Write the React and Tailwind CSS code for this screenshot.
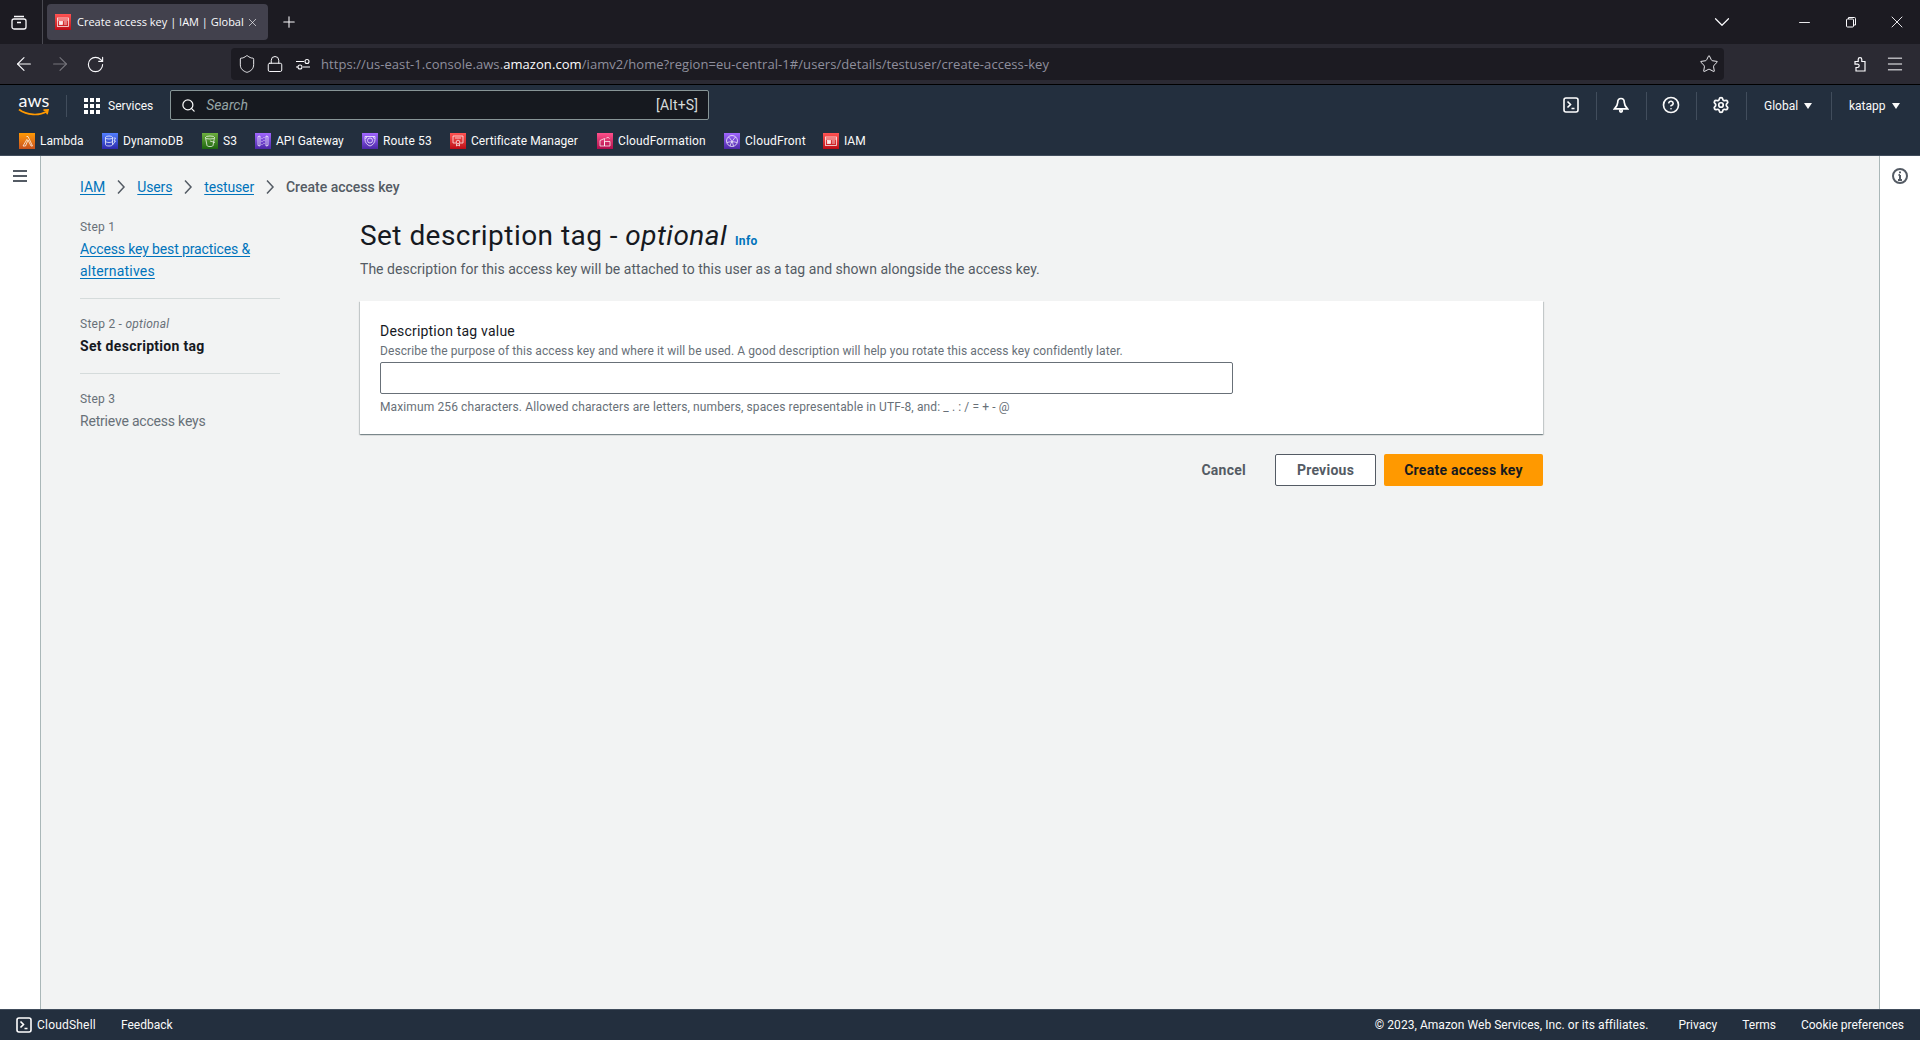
import React from "react";
import { ArrowLeft, ArrowRight, ChevronDown, CircleHelp, Lock, Menu, Minus, Plus, RotateCw, Search, Settings, Shield, Star, X } from "lucide-react";

const purple = "bg-linear-to-t from-[#4d27a8] to-[#a166ff]";
const red = "bg-linear-to-t from-[#bd0816] to-[#ff5252]";

const bookmarks = [
  { name: "Lambda", kind: "lambda", bg: "bg-linear-to-t from-[#c8511b] to-[#ff9900]", w: "w-[83px]", text: "" },
  { name: "DynamoDB", kind: "db", bg: "bg-linear-to-t from-[#2e27ad] to-[#527fff]", w: "w-[100px]", text: "tracking-[0.1px]" },
  { name: "S3", kind: "bucket", bg: "bg-linear-to-t from-[#1b660f] to-[#6cae3e]", w: "w-[53px]", text: "" },
  { name: "API Gateway", kind: "api", bg: purple, w: "w-[107px]", text: "" },
  { name: "Route 53", kind: "route", bg: purple, w: "w-[88px]", text: "tracking-[0.15px]" },
  { name: "Certificate Manager", kind: "cert", bg: red, w: "w-[147px]", text: "tracking-[0.05px]" },
  { name: "CloudFormation", kind: "stack", bg: "bg-linear-to-t from-[#b0084d] to-[#ff4f8b]", w: "w-[127px]", text: "tracking-[0.15px]" },
  { name: "CloudFront", kind: "globe", bg: purple, w: "w-[99px]", text: "tracking-[0.2px]" },
  { name: "IAM", kind: "iam", bg: red, w: "", text: "" },
];

function Glyph({ kind }) {
  const common = { fill: "none", stroke: "white", strokeWidth: 0.8, opacity: 0.9 };
  if (kind === "lambda") return <path d="M4 13h2.5L9 7l3 6h1.500L9 3.500H7.500M8.200 6 4 13" {...common} />;
  if (kind === "db")
    return (
      <g {...common}>
        <ellipse cx="7" cy="4.500" rx="3.500" ry="1.500" />
        <path d="M3.500 4.500v7c0 1 1.500 1.500 3.500 1.500s3.500-.5 3.500-1.500v-7M3.500 8c0 1 1.500 1.500 3.500 1.500s3.500-.5 3.500-1.500M11.500 5h2L12 8h1.500l-3 4" />
      </g>
    );
  if (kind === "bucket")
    return (
      <g {...common}>
        <ellipse cx="8" cy="4.500" rx="4.500" ry="1.500" />
        <path d="M3.500 4.500 5 12.500c.3.800 1.500 1 3 1s2.700-.2 3-1l1.500-8M8 8l5 1.500" />
      </g>
    );
  if (kind === "api")
    return (
      <g {...common}>
        <path d="M3 3.500 5 3v10l-2-.5zM13 3.500 11 3v10l2-.5zM7 5v1M7 8v1M7 11v1M9 4v1M9 7v1M9 10v1" />
      </g>
    );
  if (kind === "route")
    return (
      <g {...common}>
        <path d="M3 3.500h10v3c0 3-2 5.500-5 6.500-3-1-5-3.500-5-6.500z" />
        <circle cx="8" cy="7.500" r="2.500" />
        <path d="M5 3.500 3.500 6M11 3.500 12.500 6" />
      </g>
    );
  if (kind === "cert")
    return (
      <g {...common}>
        <path d="M6 10H3V3h10v7h-3M5 5h6" />
        <circle cx="8" cy="9" r="1.800" />
        <path d="M6.500 10.500V13L8 12l1.500 1v-2.500" />
      </g>
    );
  if (kind === "stack")
    return (
      <g {...common}>
        <path d="M3 7.500 7.500 5.500V13H3zM7.500 8.500H13V13H7.500zM9 5.500a2 2 0 0 1 3.500 0" />
      </g>
    );
  if (kind === "globe")
    return (
      <g {...common}>
        <circle cx="8" cy="8" r="5.500" />
        <path d="M4.500 4C7 6 9 10 9.500 13.300M11.500 4C10 6 7 9 6 13M3 9.500c3-1 7-1 10 0" />
      </g>
    );
  return (
    <g {...common}>
      <rect x="2.500" y="4" width="11" height="8.500" />
      <path d="M2.500 6h11" />
      <rect x="4.500" y="7.500" width="3" height="3" fill="white" />
      <path d="M9 8h3M9 10h3" />
    </g>
  );
}

function ServiceIcon({ kind, bg }) {
  return (
    <span className={`w-4 h-4 shrink-0 ${bg}`}>
      <svg viewBox="0 0 16 16" className="w-4 h-4">
        <Glyph kind={kind} />
      </svg>
    </span>
  );
}

function ShellIcon() {
  return (
    <svg viewBox="0 0 16 16" className="w-4 h-4" fill="none" stroke="white" strokeWidth="1.600">
      <rect x="1" y="1" width="14" height="14" rx="2" />
      <path d="m4.500 4.500 3 3-3 3M8.500 11.500h3" />
    </svg>
  );
}

function Caret() {
  return <span className="w-0 h-0 border-x-[4px] border-x-transparent border-t-[6px] border-t-[#fafafa]" />;
}

function BrowserChrome() {
  return (
    <div className="font-['Open_Sans',sans-serif]">
      <div className="h-[44px] bg-[#1c1b22] flex text-[#fbfbfe]">
        <div className="w-[43px] border-r border-[#4a4a52] flex items-center justify-center">
          <svg viewBox="0 0 16 16" className="w-4 h-4 mr-[5px] -mt-px" fill="none" stroke="#fbfbfe" strokeWidth="1.300">
            <rect x="1" y="5" width="14" height="10" rx="2" />
            <path d="M3 2.500h10M6 8.500h4" />
          </svg>
        </div>
        <div className="mt-1 ml-1 w-[221px] h-9 rounded bg-[#42414d] flex items-center pl-2 pr-[9px]">
          <ServiceIcon kind="iam" bg={red} />
          <span className="ml-[6px] pt-px text-[11px] whitespace-nowrap">Create access key | IAM | Global</span>
          <X size={13} strokeWidth={1.2} className="ml-auto" />
        </div>
        <Plus size={18} strokeWidth={1.4} className="ml-3 mt-[13px]" />
        <div className="ml-auto flex items-center">
          <ChevronDown size={26} strokeWidth={1.1} className="mr-[61px]" />
          <Minus size={17} strokeWidth={1.3} className="mr-[32px]" />
          <svg viewBox="0 0 12 12" className="w-3 h-3 mr-[30px]" fill="none" stroke="#fbfbfe" strokeWidth="1">
            <rect x="1.500" y="3" width="7" height="8" rx="1" />
            <path d="M3.500 3V1.500h6a1 1 0 0 1 1 1V9H8.500" />
          </svg>
          <X size={20} strokeWidth={1.1} className="mr-[13px]" />
        </div>
      </div>
      <div className="h-[40px] bg-[#2b2a33] flex items-center text-[#fbfbfe]">
        <ArrowLeft size={22} strokeWidth={1.2} className="ml-[13px]" />
        <ArrowRight size={22} strokeWidth={1.2} className="ml-[14px] text-[#76757c]" />
        <RotateCw size={19} strokeWidth={1.4} className="ml-[15px]" />
        <div className="ml-[126px] w-[1493px] h-8 rounded bg-[#1c1b22] flex items-center">
          <Shield size={20} strokeWidth={1.1} className="ml-[6px]" />
          <Lock size={18} strokeWidth={1.3} className="ml-[9px]" />
          <svg viewBox="0 0 16 16" className="w-4 h-4 ml-[11px]" fill="none" stroke="#fbfbfe" strokeWidth="1.100">
            <path d="M1 5.500h8M1 11h2M8 11h7" />
            <circle cx="12" cy="5.500" r="2" />
            <circle cx="5" cy="11" r="2" />
          </svg>
          <span className="ml-[10px] pt-px text-[13px] tracking-[0.07px] text-[#8f8f9d] whitespace-nowrap">
            https://us-east-1.console.aws.<span className="text-[#fbfbfe]">amazon.com</span>/iamv2/home?region=eu-central-1#/users/details/testuser/create-access-key
          </span>
          <Star size={20} strokeWidth={1.1} className="ml-auto mr-[5px]" />
        </div>
        <svg viewBox="0 0 16 16" className="w-4 h-4 ml-[128px]" fill="none" stroke="#fbfbfe" strokeWidth="1.200">
          <path d="M3 5.500h3.200V3.500a1.800 1.800 0 0 1 3.600 0V5.500H13V15H4v-3.500h1.500a1.700 1.700 0 0 0 0-3.400H3z" />
        </svg>
        <Menu size={20} strokeWidth={1.2} className="ml-[17px]" />
      </div>
      <div className="h-px bg-black" />
    </div>
  );
}

function AwsHeader() {
  return (
    <div className="bg-[#232f3e] border-b border-[#414d5c] text-[#fafafa]">
      <div className="h-[42px] flex items-center text-[12px]">
        <div className="ml-[18px] w-[32px] h-[22px] flex flex-col items-center">
          <span className="text-[18px] leading-[16px] -mt-[3px] font-['Lato',sans-serif]">aws</span>
          <svg viewBox="0 0 32 9" className="w-8 h-[9px]" fill="none" stroke="#ff9900" strokeWidth="1.700">
            <path d="M1 1.500C9 7.500 21 8 29 3.500M25.500 2.200 30 2l-1 4.300" />
          </svg>
        </div>
        <div className="ml-4 w-px h-[22px] bg-[#414d5c]" />
        <div className="ml-[17px] grid grid-cols-3 gap-[2px] w-4">
          {[...Array(9)].map((_, i) => (
            <span key={i} className="w-[4px] h-[4px] bg-white" />
          ))}
        </div>
        <span className="ml-2">Services</span>
        <div className="ml-[17px] -mt-[2px] w-[539px] h-[30px] bg-[#16191f] border border-[#879596] rounded-[2px] flex items-center px-[10px] text-[14px] text-[#d5dbdb]">
          <Search size={15} strokeWidth={2} className="text-[#fafafa]" />
          <span className="ml-[10px] italic text-[#95a5a6]">Search</span>
          <span className="ml-auto tracking-[0.2px] text-[#d5dbdb]">[Alt+S]</span>
        </div>
        <div className="ml-auto flex items-center h-[28px]">
          <div className="w-[50px] flex justify-center -translate-y-px"><ShellIcon /></div>
          <div className="w-[50px] border-l border-[#414d5c] h-full flex items-center justify-center">
            <svg viewBox="0 0 16 16" className="w-4 h-4 -translate-y-px -translate-x-px" fill="none" stroke="white" strokeWidth="1.700">
              <path d="M8 1.500c-2.200 0-3.300 1.800-3.300 4 0 2.700-1.200 4-3.200 6.300h13c-2-2.300-3.200-3.600-3.200-6.300 0-2.200-1.100-4-3.300-4z" />
              <circle cx="8" cy="13.800" r="1.300" />
            </svg>
          </div>
          <div className="w-[50px] border-l border-[#414d5c] h-full flex items-center justify-center"><CircleHelp size={18} strokeWidth={2.2} className="-translate-y-px -translate-x-px" /></div>
          <div className="w-[50px] border-l border-[#414d5c] h-full flex items-center justify-center"><Settings size={18} strokeWidth={2.3} className="-translate-y-px -translate-x-px" /></div>
          <div className="w-[85px] border-l border-[#414d5c] h-full flex items-center pl-[17px] gap-[6px]"><span>Global</span><Caret /></div>
          <div className="w-[89px] border-l border-[#414d5c] h-full flex items-center pl-[17px] gap-[6px]"><span>katapp</span><Caret /></div>
        </div>
      </div>
      <div className="h-[28px] flex items-center pl-[19px] text-[12px]">
        {bookmarks.map((b) => (
          <div key={b.name} className={`flex items-center gap-[5px] ${b.w}`}>
            <ServiceIcon kind={b.kind} bg={b.bg} />
            <span className={`whitespace-nowrap ${b.text}`}>{b.name}</span>
          </div>
        ))}
      </div>
    </div>
  );
}

function Crumb({ children, tight }) {
  return <a className={`text-[#0073bb] underline underline-offset-2 ${tight ? "tracking-[-0.15px]" : ""}`}>{children}</a>;
}

function Sep() {
  return (
    <svg viewBox="0 0 10 16" className="w-[10px] h-4 mx-[11px]" fill="none" stroke="#545b64" strokeWidth="1.500">
      <path d="m2 1.500 6 6.500-6 6.500" />
    </svg>
  );
}

function Steps() {
  return (
    <div className="w-[200px] shrink-0 pt-px">
      <div className="text-[12px] leading-4 tracking-[0.2px] text-[#687078]">Step 1</div>
      <a className="block mt-[3px] text-[14px] leading-[22px] text-[#0073bb] underline underline-offset-2">
        <span className="tracking-[-0.13px]">Access key best practices &amp;</span><br />
        <span className="tracking-[0.2px]">alternatives</span>
      </a>
      <div className="mt-4 h-px bg-[#d5dbdb]" />
      <div className="mt-[17px] text-[12px] leading-4 tracking-[0.25px] text-[#687078]">Step 2 - <i>optional</i></div>
      <div className="mt-[3px] text-[14px] leading-[22px] font-bold tracking-[0.3px] text-[#16191f]">Set description tag</div>
      <div className="mt-4 h-px bg-[#d5dbdb]" />
      <div className="mt-[17px] text-[12px] leading-4 tracking-[0.2px] text-[#687078]">Step 3</div>
      <div className="mt-[3px] text-[14px] leading-[22px] tracking-[-0.2px] text-[#687078]">Retrieve access keys</div>
    </div>
  );
}

function Form() {
  return (
    <div className="ml-[80px] w-[1183px]">
      <div className="flex items-baseline h-9">
        <h1 className="text-[28px] leading-9 tracking-[0.45px] text-[#16191f]">Set description tag - <i>optional</i></h1>
        <a className="ml-2 text-[12px] font-bold tracking-[0.3px] text-[#0073bb]">Info</a>
      </div>
      <p className="mt-[5px] text-[14px] leading-5 tracking-[0.03px] text-[#545b64]">
        The description for this access key will be attached to this user as a tag and shown alongside the access key.
      </p>
      <div className="mt-[22px] h-[133px] bg-white px-5 pt-5 shadow-[0_1px_1px_0_rgba(0,28,36,0.3),1px_1px_1px_0_rgba(0,28,36,0.15),-1px_1px_1px_0_rgba(0,28,36,0.15)]">
        <div className="text-[14px] leading-5 tracking-[0.2px] text-[#16191f]">Description tag value</div>
        <div className="mt-[2px] text-[12px] leading-4 tracking-[0.087px] text-[#687078]">
          Describe the purpose of this access key and where it will be used. A good description will help you rotate this access key confidently later.
        </div>
        <input className="block mt-[3px] w-[853px] h-8 border border-[#687078] rounded-[2px] bg-white" />
        <div className="mt-[5px] text-[12px] leading-4 tracking-[0.115px] text-[#687078]">
          Maximum 256 characters. Allowed characters are letters, numbers, spaces representable in UTF-8, and: _ . : / = + - @
        </div>
      </div>
      <div className="mt-5 flex justify-end items-center text-[14px] font-bold tracking-[0.25px]">
        <span className="mr-[29px] text-[#545b64]">Cancel</span>
        <button className="w-[101px] h-8 border border-[#545b64] rounded-[2px] bg-white text-[#545b64]">Previous</button>
        <button className="ml-2 w-[159px] h-8 rounded-[2px] bg-[#ff9900] text-[#16191f]">Create access key</button>
      </div>
    </div>
  );
}

export default function App() {
  return (
    <div className="h-screen flex flex-col overflow-hidden font-['Roboto',sans-serif]">
      <BrowserChrome />
      <AwsHeader />
      <div className="flex-1 flex min-h-0">
        <div className="w-[41px] bg-white border-r border-[#aab7b8] flex justify-center pt-[14px]">
          <svg viewBox="0 0 14 12" className="w-[14px] h-3" fill="#545b64">
            <rect width="14" height="2" />
            <rect y="5" width="14" height="2" />
            <rect y="10" width="14" height="2" />
          </svg>
        </div>
        <main className="flex-1 bg-[#f2f3f3] pl-[39px] pt-[21px]">
          <div className="flex items-center h-5 text-[14px]">
            <Crumb>IAM</Crumb><Sep />
            <Crumb tight>Users</Crumb><Sep />
            <Crumb tight>testuser</Crumb><Sep />
            <span className="text-[#545b64] font-medium">Create access key</span>
          </div>
          <div className="mt-[21px] flex">
            <Steps />
            <Form />
          </div>
        </main>
        <div className="w-[41px] bg-white border-l border-[#aab7b8] flex justify-center pt-3">
          <svg viewBox="0 0 16 16" className="w-4 h-4" fill="none" stroke="#545b64" strokeWidth="2">
            <circle cx="8" cy="8" r="7" />
            <path d="M8 7v5M6 12h4M6.500 7H8M8 3.500v1.800" />
          </svg>
        </div>
      </div>
      <div className="h-[31px] bg-[#232f3e] border-t border-[#414d5c] flex items-center text-[12px] text-[#fafafa]">
        <div className="ml-4"><ShellIcon /></div>
        <span className="ml-[5px] tracking-[0.2px]">CloudShell</span>
        <span className="ml-[25px]">Feedback</span>
        <span className="ml-auto tracking-[0.05px]">© 2023, Amazon Web Services, Inc. or its affiliates.</span>
        <span className="ml-[30px]">Privacy</span>
        <span className="ml-[25px]">Terms</span>
        <span className="ml-[25px] mr-4">Cookie preferences</span>
      </div>
    </div>
  );
}
